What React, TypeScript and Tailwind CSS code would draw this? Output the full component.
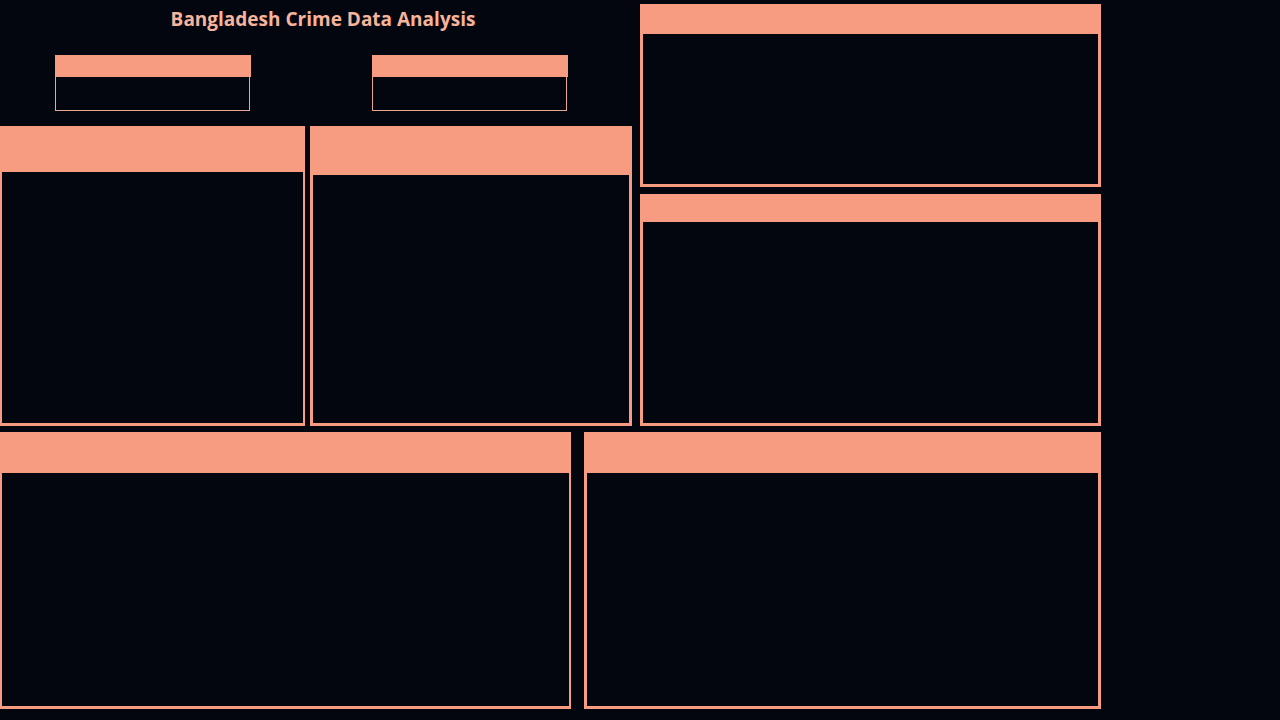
export default function App() {
  return (
    <div className="w-[1280px] h-[720px] bg-[#03050f] overflow-hidden font-['Open_Sans',sans-serif]">
      <div className="flex">
        {/* Left column */}
        <div className="w-[632px] flex flex-col">
          <h1 className="h-[38px] pt-[5px] text-center text-[19px] font-bold text-[#f6b49b] leading-[28px] pl-[14px]">
            Bangladesh Crime Data Analysis
          </h1>
          <div className="flex pl-[55px] gap-[121px] mt-[17px]">
            <SmallCard />
            <SmallCard />
          </div>
          <div className="flex gap-[5px] mt-[15px]">
            <Panel className="w-[305px] h-[300px]" header="h-[46px]" body="mx-[2px] mb-[3px]" />
            <Panel className="w-[322px] h-[300px]" header="h-[49px]" />
          </div>
        </div>
        {/* Right column */}
        <div className="ml-[8px] w-[461px] flex flex-col pt-[4px] gap-[7px]">
          <Panel className="h-[183px]" header="h-[30px]" />
          <Panel className="h-[232px]" header="h-[28px]" />
        </div>
      </div>
      <div className="flex mt-[6px] gap-[13px]">
        <Panel className="w-[571px] h-[277px]" header="h-[41px]" body="mx-[2px] mb-[3px]" />
        <Panel className="w-[517px] h-[277px]" header="h-[41px]" />
      </div>
    </div>
  );
}

function SmallCard() {
  return (
    <div className="w-[196px] flex flex-col">
      <div className="h-[22px] bg-[#f89c81]" />
      <div className="h-[34px] w-[195px] border border-t-0 border-[#e9a78f]" />
    </div>
  );
}

function Panel({
  className,
  header,
  body = "mx-[3px] mb-[3px]",
}: {
  className: string;
  header: string;
  body?: string;
}) {
  return (
    <div className={`flex flex-col bg-[#f89c81] ${className}`}>
      <div className={`shrink-0 ${header}`} />
      <div className={`flex-1 bg-[#03050f] ${body}`} />
    </div>
  );
}
